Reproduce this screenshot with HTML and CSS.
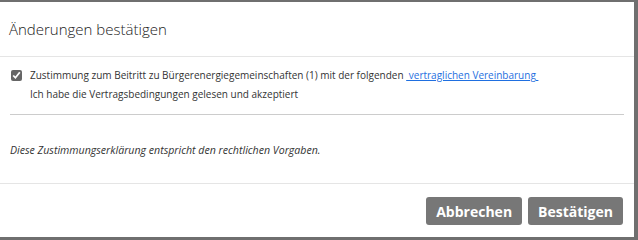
FILE: index.html
```html
<!DOCTYPE html>
<html lang="de">
<head>
  <meta charset="UTF-8">
  <meta name="viewport" content="width=device-width, initial-scale=1.0">
  <title>Änderungen bestätigen</title>
  <link rel="stylesheet" href="styles.css">
</head>
<body>

<div class="modal">
  <div class="modal-header">
    <h4 class="modal-title">Änderungen bestätigen</h4>
  </div>

  <div class="modal-body">
    <label class="consent">
      <input type="checkbox" checked>
      <span class="consent-text">
        Zustimmung zum Beitritt zu Bürgerenergiegemeinschaften (1) mit der folgenden <a href="#">&nbsp;vertraglichen Vereinbarung&nbsp;</a><br>
        Ich habe die Vertragsbedingungen gelesen und akzeptiert
      </span>
    </label>
    <hr>
    <p class="note">Diese Zustimmungserklärung entspricht den rechtlichen Vorgaben.</p>
  </div>

  <div class="modal-footer">
    <button class="btn">Abbrechen</button>
    <button class="btn">Bestätigen</button>
  </div>
</div>

</body>
</html>
```

FILE: styles.css
```css
body {
  margin: 0;
  padding: 0;
  background-color: #6f6f6f;
  font-family: 'Open Sans', 'Segoe UI', sans-serif;
  color: #333;
  height: 240px;
  overflow: hidden;
}

.modal {
  margin-top: 2px;
  width: 634px;
  height: 235px;
  background-color: #fff;
  display: flex;
  flex-direction: column;
}

.modal-header {
  height: 54px;
  padding: 0 9px;
  border-bottom: 1px solid #e5e5e5;
  display: flex;
  align-items: center;
}

.modal-title {
  margin: 0;
  font-size: 15px;
  font-weight: 300;
  color: #222;
}

.modal-body {
  flex: 1;
  padding: 9px 10px 0;
}

.consent {
  display: flex;
  align-items: flex-start;
  font-size: 10px;
  line-height: 19px;
}

.consent input {
  width: 11px;
  height: 11px;
  margin: 4px 8px 0 1px;
  accent-color: #666;
}

.consent-text a {
  color: #1f6fe0;
  text-decoration: underline;
}

hr {
  margin: 10px 0 0;
  border: none;
  border-top: 1px solid #ccc;
}

.note {
  margin: 28px 0 0;
  font-size: 10.6px;
  font-style: italic;
  line-height: 14px;
}

.modal-footer {
  border-top: 1px solid #e5e5e5;
  padding: 13px 11px 12px;
  display: flex;
  justify-content: flex-end;
  gap: 6px;
}

.btn {
  height: 28px;
  padding: 0 10px;
  border: none;
  border-radius: 3px;
  background-color: #777;
  color: #fff;
  font-family: 'Open Sans', sans-serif;
  font-weight: 700;
  font-size: 14px;
  cursor: pointer;
}
```
